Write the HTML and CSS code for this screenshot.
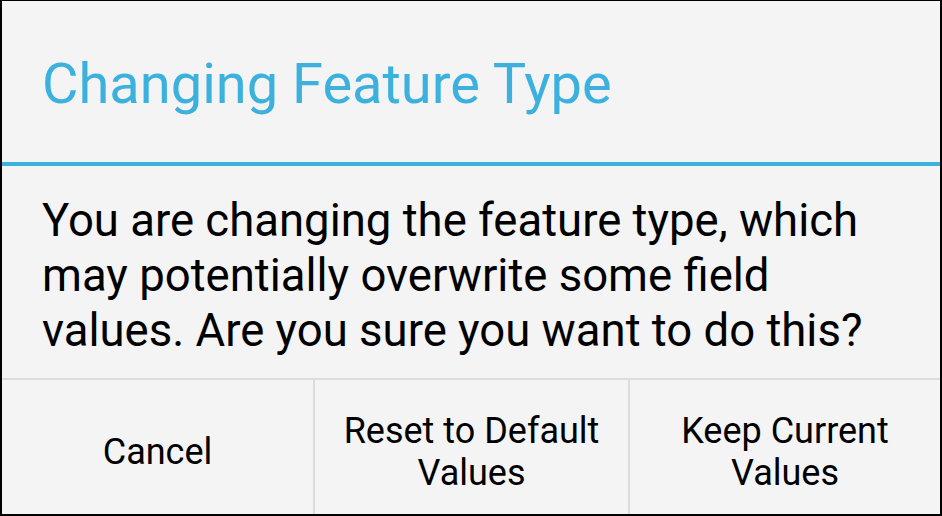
FILE: index.html
```html
<!DOCTYPE html>
<html lang="en">
<head>
    <meta charset="UTF-8">
    <meta name="viewport" content="width=device-width, initial-scale=1.0">
    <title>Changing Feature Type</title>
    <link rel="stylesheet" href="styles.css">
</head>
<body>
    <div class="dialog">
        <div class="dialog-title">Changing Feature Type</div>
        <div class="dialog-message">
            You are changing the feature type, which may potentially overwrite some field values. Are you sure you want to do this?
        </div>
        <div class="dialog-buttons">
            <button class="btn">Cancel</button>
            <button class="btn">Reset to Default Values</button>
            <button class="btn">Keep Current Values</button>
        </div>
    </div>
</body>
</html>
```

FILE: styles.css
```css
html, body {
    margin: 0;
    padding: 0;
}
body {
    font-family: Roboto, "Noto Sans", sans-serif;
    background-color: #000;
    width: 942px;
    height: 516px;
}
.dialog {
    box-sizing: border-box;
    width: 942px;
    height: 516px;
    background: #f4f4f4;
    border: 2px solid #000;
    border-top-width: 1px;
    display: flex;
    flex-direction: column;
}
.dialog-title {
    height: 165px;
    box-sizing: border-box;
    padding: 4px 40px 0;
    display: flex;
    align-items: center;
    font-size: 56px;
    color: #3cb1de;
    border-bottom: 4px solid #3cb1de;
}
.dialog-message {
    flex: 1;
    padding: 27px 40px 0;
    font-size: 45.5px;
    line-height: 55px;
    color: #000;
    border-bottom: 2px solid #dcdcdc;
}
.dialog-buttons {
    height: 134px;
    display: grid;
    grid-template-columns: 311px 315px 1fr;
}
.btn {
    font-family: inherit;
    font-size: 36px;
    line-height: 42px;
    color: #000;
    background: none;
    border: none;
    border-left: 2px solid #dcdcdc;
    padding: 10px 20px 0;
    margin: 0;
}
.btn:first-child {
    border-left: none;
}
```
